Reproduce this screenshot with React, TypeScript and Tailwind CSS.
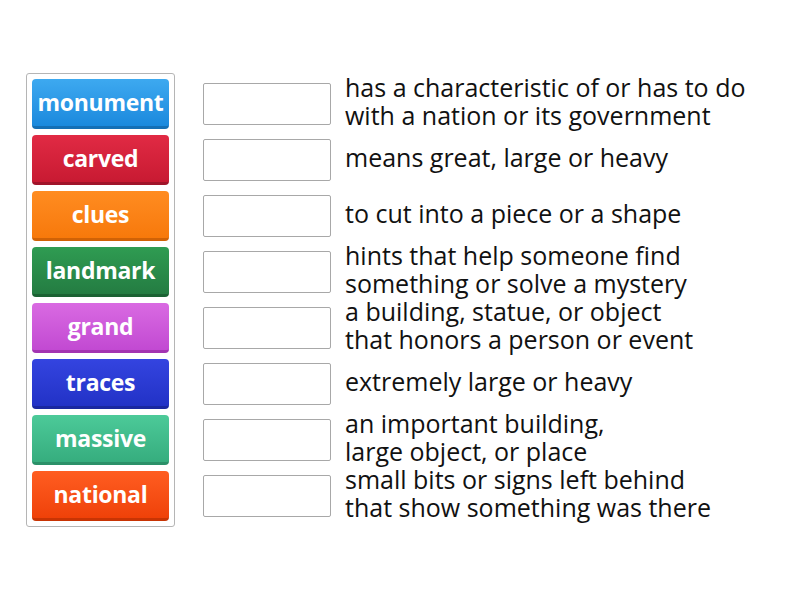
const words = [
  { label: 'monument', color: 'bg-gradient-to-b from-[#3da9f0] to-[#1a89dd] border-b-[#146fb5]' },
  { label: 'carved', color: 'bg-gradient-to-b from-[#e12a44] to-[#c81a32] border-b-[#a0142a]' },
  { label: 'clues', color: 'bg-gradient-to-b from-[#ff8c20] to-[#f7790a] border-b-[#d06206]' },
  { label: 'landmark', color: 'bg-gradient-to-b from-[#2f9c52] to-[#247c42] border-b-[#1b6233]' },
  { label: 'grand', color: 'bg-gradient-to-b from-[#d96ae2] to-[#c249d2] border-b-[#a334b2]' },
  { label: 'traces', color: 'bg-gradient-to-b from-[#3444e0] to-[#2232c6] border-b-[#1a27a0]' },
  { label: 'massive', color: 'bg-gradient-to-b from-[#4cca99] to-[#36ad7e] border-b-[#2b9068]' },
  { label: 'national', color: 'bg-gradient-to-b from-[#ff5d20] to-[#ef4108] border-b-[#c83404]' },
];

const definitions = [
  ['has a characteristic of or has to do', 'with a nation or its government'],
  ['means great, large or heavy'],
  ['to cut into a piece or a shape'],
  ['hints that help someone find', 'something or solve a mystery'],
  ['a building, statue, or object', 'that honors a person or event'],
  ['extremely large or heavy'],
  ['an important building,', 'large object, or place'],
  ['small bits or signs left behind', 'that show something was there'],
];

export default function App() {
  return (
    <div className="w-[800px] h-[600px] bg-white flex items-start font-['Open_Sans',sans-serif]">
      <div className="ml-[26px] mt-[73px] border border-[#b5b5b5] rounded-[3px] p-[5px] flex flex-col gap-[6px]">
        {words.map((w) => (
          <div
            key={w.label}
            className={`${w.color} w-[137px] h-[50px] rounded-[4px] border-b-[3px] flex items-center justify-center text-white text-[23px] font-bold tracking-[-0.3px]`}
          >
            {w.label}
          </div>
        ))}
      </div>

      <div className="ml-[28px] mt-[79px] flex flex-col gap-[6px]">
        {definitions.map((lines, i) => (
          <div key={i} className="h-[50px] flex items-center">
            <div className="w-[128px] h-[42px] border border-[#a8a8a8] rounded-[2px] bg-white shrink-0" />
            <div className="ml-[14px] pb-[6px] text-[25px] leading-[28px] text-[#111] whitespace-nowrap">
              {lines.map((l) => (
                <div key={l}>{l}</div>
              ))}
            </div>
          </div>
        ))}
      </div>
    </div>
  );
}
